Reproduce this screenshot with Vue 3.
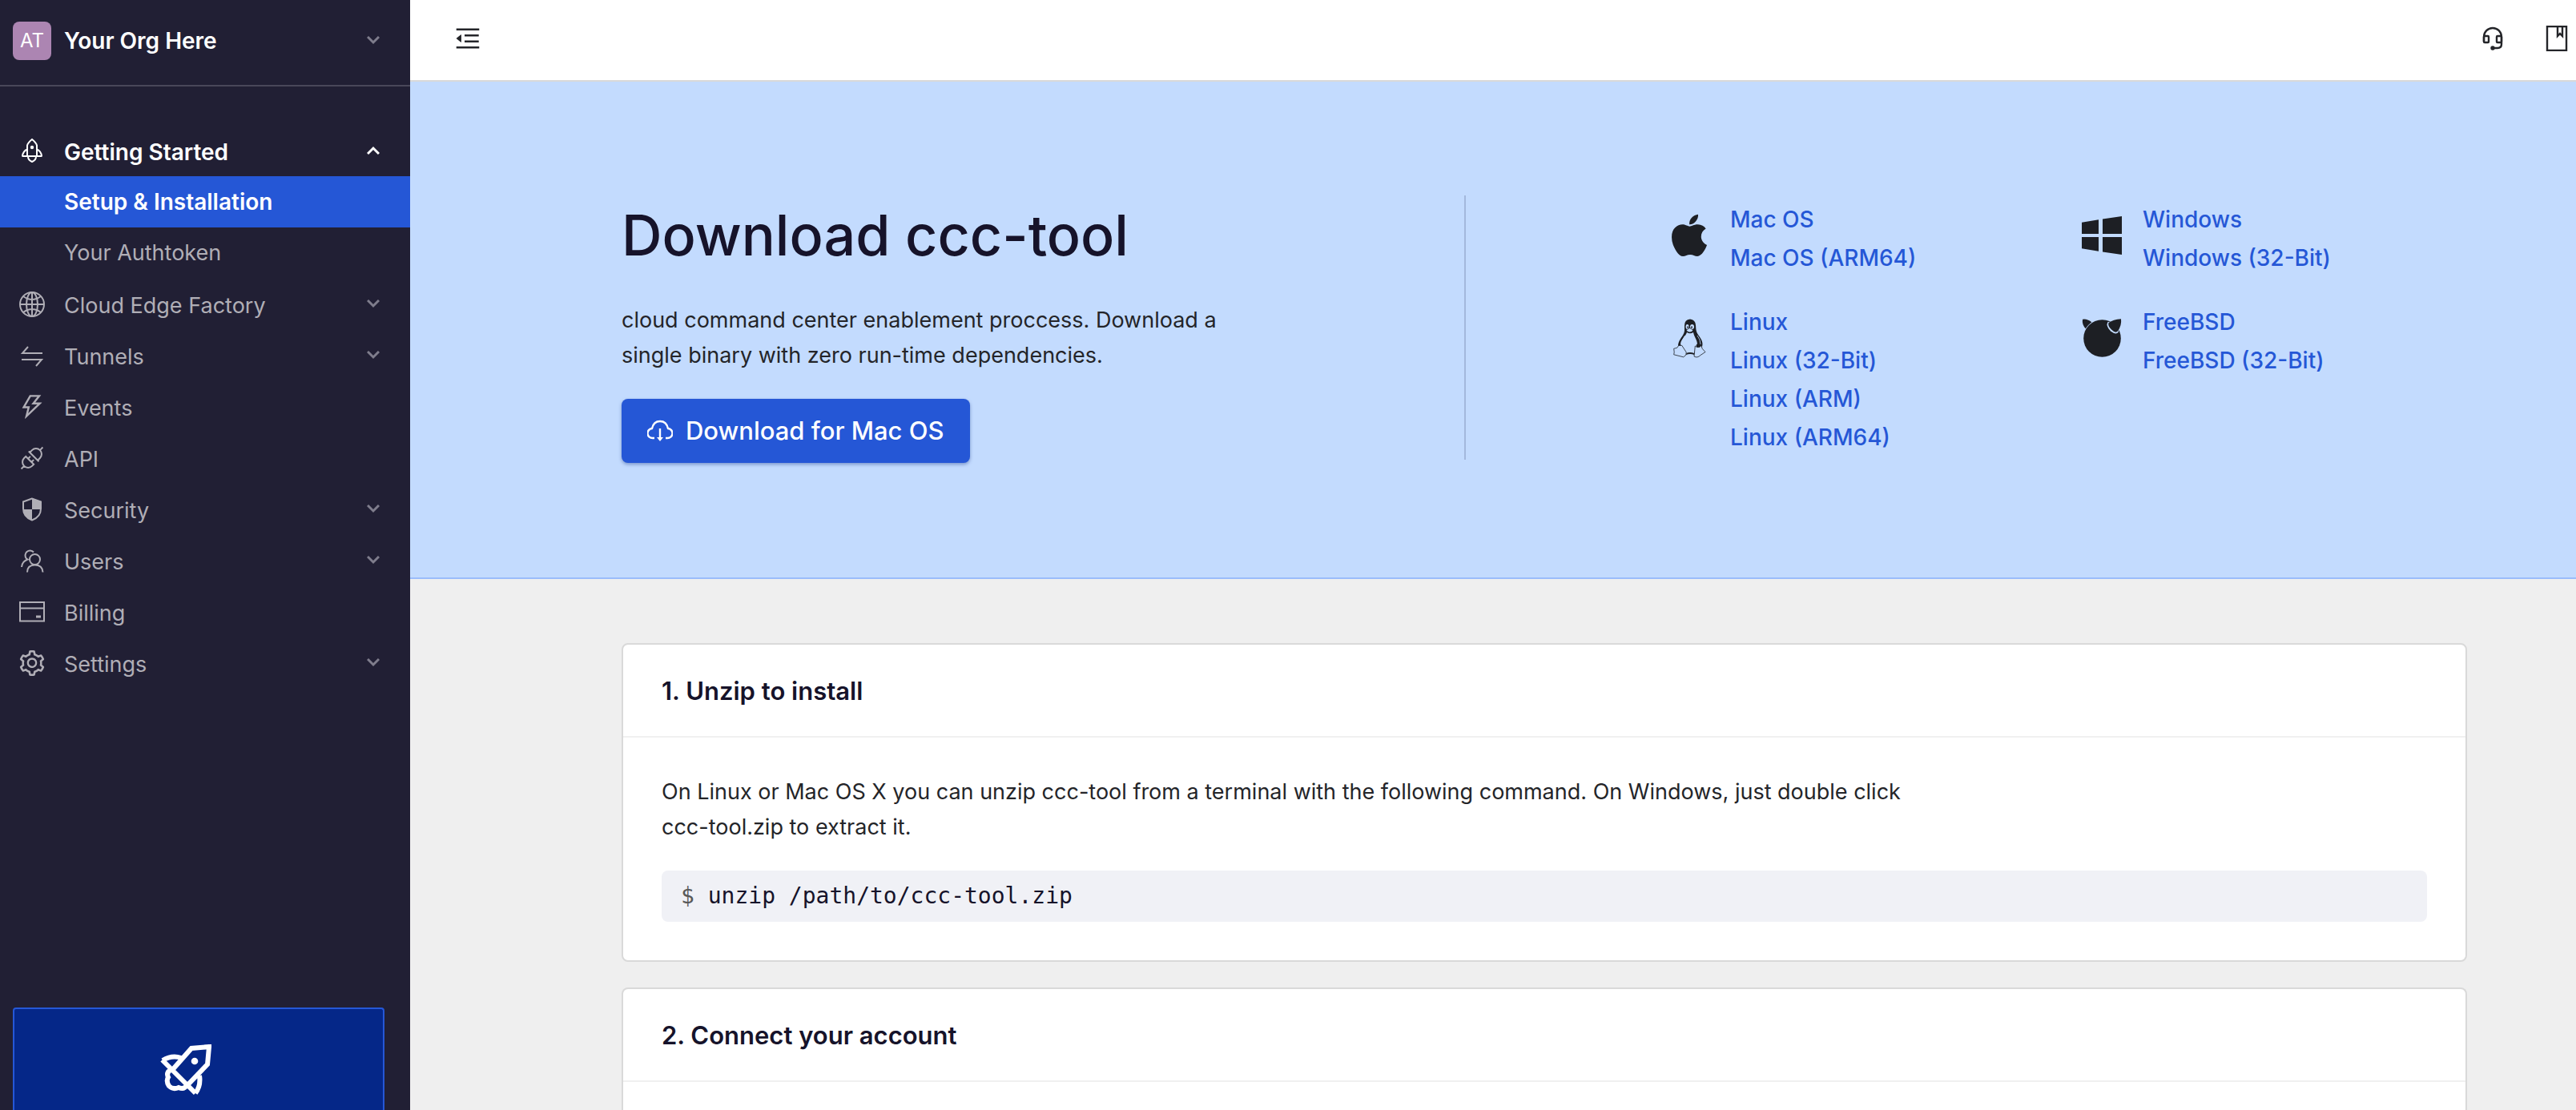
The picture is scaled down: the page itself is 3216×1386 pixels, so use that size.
<script setup>
const navItems = [
  { label: 'Cloud Edge Factory', icon: 'globe', expandable: true },
  { label: 'Tunnels', icon: 'swap', expandable: true },
  { label: 'Events', icon: 'bolt', expandable: false },
  { label: 'API', icon: 'plug', expandable: false },
  { label: 'Security', icon: 'shield', expandable: true },
  { label: 'Users', icon: 'users', expandable: true },
  { label: 'Billing', icon: 'card', expandable: false },
  { label: 'Settings', icon: 'gear', expandable: true },
]

const platforms = [
  { icon: 'apple', links: ['Mac OS', 'Mac OS (ARM64)'] },
  { icon: 'windows', links: ['Windows', 'Windows (32-Bit)'] },
  { icon: 'linux', links: ['Linux', 'Linux (32-Bit)', 'Linux (ARM)', 'Linux (ARM64)'] },
  { icon: 'freebsd', links: ['FreeBSD', 'FreeBSD (32-Bit)'] },
]
</script>

<template>
  <div class="app">
    <aside class="sidebar">
      <button class="org" type="button">
        <span class="avatar">AT</span>
        <span class="org-name">Your Org Here</span>
        <svg class="chevron" viewBox="0 0 16 12"><path d="M1 1l7 7 7-7" /></svg>
      </button>

      <nav class="nav">
        <button class="nav-item open" type="button">
          <svg class="nav-icon line" viewBox="0 0 32 32">
            <path d="M10 23V9.500Q11 6 16 2q5 4 6 7.500V23M3.500 23h25M10 14.500Q4.500 17 4 23M22 14.500q5.500 2.500 6 8.500M11 23.500Q11 28 16 30q5-2 5-6.500" />
            <circle cx="16" cy="12" r="1.200" />
          </svg>
          <span class="nav-label">Getting Started</span>
          <svg class="chevron" viewBox="0 0 16 12"><path d="M1 10l7-7 7 7" /></svg>
        </button>
        <a class="sub-item active" href="#setup">Setup &amp; Installation</a>
        <a class="sub-item" href="#authtoken">Your Authtoken</a>

        <button v-for="item in navItems" :key="item.label" class="nav-item" type="button">
          <svg v-if="item.icon === 'globe'" class="nav-icon line" viewBox="0 0 32 32">
            <circle cx="16" cy="16" r="15" />
            <ellipse cx="16" cy="16" rx="7" ry="15" />
            <path d="M16 1v30M1 16h30M5 6q11 8 22 0M5 26q11-8 22 0" />
          </svg>
          <svg v-else-if="item.icon === 'swap'" class="nav-icon line" viewBox="0 0 32 32">
            <path d="M29 13H4l7-8M3 21h25l-7 8" />
          </svg>
          <svg v-else-if="item.icon === 'bolt'" class="nav-icon solid" viewBox="64 64 896 896">
            <path d="M848 359.300H627.700L825.800 109c4.100-5.300.4-13-6.300-13H436c-2.800 0-5.500 1.500-6.900 4L170 547.500c-3.100 5.300.7 12 6.900 12h174.400l-89.400 357.600c-1.900 7.800 7.500 13.300 13.300 7.700L853.500 373c5.200-4.900 1.700-13.700-5.500-13.700zM378.200 732.500l60.300-241H281.100l189.600-327.400h224.600L487 427.400h211L378.200 732.500z" />
          </svg>
          <svg v-else-if="item.icon === 'plug'" class="nav-icon line" viewBox="0 0 32 32">
            <g transform="translate(16 16) rotate(-45)">
              <path d="M-19 0h5M-4-8v16M-4-7h-3a7 7 0 0 0 0 14h3M-4-3h4M-4 3h4M14 0h5M3-9v18M3-7h4a7 7 0 0 1 0 14H3" />
            </g>
          </svg>
          <svg v-else-if="item.icon === 'shield'" class="nav-icon" viewBox="0 0 32 32">
            <path class="stroke" d="M16 2.500L5 6.500V15q0 10.500 11 14.500 11-4 11-14.500V6.500z" />
            <path class="fill" d="M16 2v14h11V6zM5 16h11v14Q6 26 5 16z" />
          </svg>
          <svg v-else-if="item.icon === 'users'" class="nav-icon line" viewBox="0 0 32 32">
            <circle cx="19.500" cy="14.500" r="6.500" />
            <path d="M10 30.500q0-9 9.500-9t10 9M18 5.500A6 6 0 1 0 9 13.500l1.500 1Q3.500 17 3 24" />
          </svg>
          <svg v-else-if="item.icon === 'card'" class="nav-icon line" viewBox="0 0 32 32">
            <path d="M1 4h30v23.500H1zM1 11.500h30" />
            <path class="thick" d="M21 22h6" />
          </svg>
          <svg v-else class="nav-icon solid" viewBox="64 64 896 896">
            <path d="M924.800 625.700l-65.500-56c3.100-19 4.700-38.400 4.700-57.800s-1.600-38.800-4.700-57.800l65.500-56a32.030 32.030 0 009.300-35.200l-.9-2.600a443.740 443.740 0 00-79.700-137.900l-1.800-2.100a32.120 32.120 0 00-35.100-9.500l-81.300 28.900c-30-24.600-63.500-44-99.700-57.600l-15.700-85a32.050 32.050 0 00-25.800-25.700l-2.700-.5c-52.100-9.400-106.900-9.400-159 0l-2.700.5a32.050 32.050 0 00-25.800 25.700l-15.800 85.400a351.860 351.860 0 00-99 57.400l-81.900-29.100a32 32 0 00-35.100 9.500l-1.800 2.100a446.020 446.020 0 00-79.700 137.900l-.9 2.600c-4.500 12.500-.8 26.500 9.300 35.200l66.300 56.600c-3.100 18.800-4.600 38-4.600 57.100 0 19.200 1.500 38.400 4.600 57.100L99 625.500a32.030 32.030 0 00-9.300 35.200l.9 2.600c18.100 50.400 44.900 96.900 79.700 137.900l1.800 2.100a32.120 32.120 0 0035.100 9.500l81.900-29.100c29.800 24.500 63.100 43.900 99 57.400l15.800 85.400a32.050 32.050 0 0025.800 25.700l2.700.5a449.400 449.400 0 00159 0l2.700-.5a32.050 32.050 0 0025.800-25.700l15.700-85a350 350 0 0099.700-57.600l81.300 28.900a32 32 0 0035.100-9.500l1.800-2.100c34.800-41.100 61.600-87.500 79.700-137.900l.9-2.600c4.500-12.300.8-26.300-9.300-35zM788.300 465.900c2.500 15.100 3.800 30.600 3.800 46.100s-1.300 31-3.800 46.100l-6.600 40.100 74.700 63.900a370.030 370.030 0 01-42.600 73.600L721 702.800l-31.400 25.800c-23.900 19.600-50.500 35-79.300 45.800l-38.100 14.300-17.900 97a377.500 377.500 0 01-85 0l-17.900-97.200-37.800-14.500c-28.500-10.800-55-26.200-78.700-45.700l-31.400-25.900-93.400 33.200c-17-22.900-31.200-47.600-42.600-73.600l75.500-64.500-6.500-40c-2.400-14.900-3.700-30.300-3.700-45.500 0-15.300 1.200-30.600 3.700-45.500l6.500-40-75.500-64.500c11.300-26.100 25.600-50.700 42.600-73.600l93.400 33.200 31.400-25.900c23.700-19.500 50.200-34.900 78.700-45.700l37.900-14.300 17.900-97.200c28.100-3.200 56.800-3.200 85 0l17.900 97 38.100 14.300c28.700 10.800 55.400 26.200 79.300 45.800l31.400 25.800 92.800-32.900c17 22.900 31.200 47.600 42.600 73.600L781.800 426l6.500 39.900zM512 326c-97.200 0-176 78.800-176 176s78.800 176 176 176 176-78.800 176-176-78.800-176-176-176zm79.200 255.200A111.600 111.600 0 01512 614c-29.900 0-58-11.700-79.200-32.800A111.600 111.600 0 01400 502c0-29.900 11.700-58 32.800-79.200C454 401.600 482.100 390 512 390c29.900 0 58 11.600 79.200 32.800A111.600 111.600 0 01624 502c0 29.900-11.700 58-32.800 79.200z" />
          </svg>
          <span class="nav-label">{{ item.label }}</span>
          <svg v-if="item.expandable" class="chevron" viewBox="0 0 16 12"><path d="M1 1l7 7 7-7" /></svg>
        </button>
      </nav>

      <div class="promo">
        <svg class="promo-icon" viewBox="0 0 64 64">
          <path d="M2.500 19.500L44 61M16 31L39 5l22-2-2 22-25 26M3 20q12-7 23-3M49 39q2 13-5 22M13 32q-6 3-3 9-3 5 1 11 5 5 12 2 7 3 10-3" />
          <circle cx="43" cy="21" r="4.300" />
        </svg>
      </div>
    </aside>

    <div class="main">
      <header class="topbar">
        <button class="icon-button" type="button" aria-label="Collapse menu">
          <svg class="top-icon solid" viewBox="64 64 896 896">
            <path d="M408 442h480c4.400 0 8-3.600 8-8v-56c0-4.400-3.600-8-8-8H408c-4.400 0-8 3.600-8 8v56c0 4.400 3.600 8 8 8zm-8 204c0 4.400 3.600 8 8 8h480c4.400 0 8-3.600 8-8v-56c0-4.400-3.600-8-8-8H408c-4.400 0-8 3.600-8 8v56zm504-486H120c-4.400 0-8 3.600-8 8v56c0 4.400 3.600 8 8 8h784c4.400 0 8-3.600 8-8v-56c0-4.400-3.600-8-8-8zm0 632H120c-4.400 0-8 3.600-8 8v56c0 4.400 3.600 8 8 8h784c4.400 0 8-3.600 8-8v-56c0-4.400-3.600-8-8-8zM115.400 518.900L271.700 642c5.800 4.600 14.400.5 14.400-6.900V388.900c0-7.400-8.500-11.500-14.400-6.900L115.400 505.100a8.740 8.740 0 000 13.800z" />
          </svg>
        </button>
        <div class="top-actions">
          <button class="icon-button" type="button" aria-label="Support">
            <svg class="top-icon line" viewBox="0 0 32 32">
              <path d="M5 20v-6a11 11 0 0 1 22 0v9q0 5-5 5h-5" />
              <rect x="5" y="13" width="6" height="8" rx="1" />
              <rect x="21" y="13" width="6" height="8" rx="1" />
              <circle class="fill" cx="16" cy="28" r="1.500" />
            </svg>
          </button>
          <button class="icon-button" type="button" aria-label="Documentation">
            <svg class="top-icon line" viewBox="0 0 32 32">
              <path d="M4 1h24v30H4zM17 1v12l3-3 3 3V1" />
            </svg>
          </button>
        </div>
      </header>

      <section class="hero">
        <div class="intro">
          <h1>Download ccc-tool</h1>
          <p>cloud command center enablement proccess. Download a<br />single binary with zero run-time dependencies.</p>
          <button class="download" type="button">
            <svg class="cloud" viewBox="0 0 32 32">
              <path d="M9 25H7a6 6 0 0 1-1-12Q8 4 16 4t10 9a6 6 0 0 1-1 12h-2M16 13v14" />
              <path class="tip" d="M12 24h8l-4 5z" />
            </svg>
            Download for Mac OS
          </button>
        </div>

        <div class="platforms">
          <div v-for="platform in platforms" :key="platform.icon" class="platform">
            <svg v-if="platform.icon === 'apple'" class="os-icon" viewBox="0 26 384 462">
              <path d="M318.700 268.700c-.2-36.700 16.400-64.400 50-84.800-18.800-26.900-47.200-41.700-84.700-44.600-35.500-2.800-74.300 20.700-88.500 20.700-15 0-49.400-19.700-76.400-19.700C63.300 141.200 4 184.800 4 273.500q0 39.300 14.400 81.200c12.800 36.700 59 126.700 107.200 125.200 25.200-.6 43-17.900 75.800-17.900 31.800 0 48.300 17.900 76.400 17.900 48.600-.7 90.400-82.500 102.600-119.300-65.200-30.700-61.700-90-61.700-91.900zm-56.600-164.200c27.300-32.400 24.800-61.900 24-72.500-24.100 1.400-52 16.400-67.900 34.900-17.500 19.800-27.800 44.300-25.600 71.900 26.100 2 49.900-11.400 69.500-34.300z" />
            </svg>
            <svg v-else-if="platform.icon === 'windows'" class="os-icon" viewBox="0 -3 50 54">
              <path d="M0 7.700l21-3.400V22H0zM26 3.500L50 0v22H26zM0 26h21v17.700L0 40.300zM26 26h24v22l-24-3.500z" />
            </svg>
            <svg v-else-if="platform.icon === 'linux'" class="os-icon" viewBox="-5 -3 50 54">
              <path d="M21 .5q-7 .5-7 8c0 6 .5 8-2 12C9 25 6 29 6 34l10 11q5-2 10 0l10-10c2-6-2-11-5-15-3-5-2.500-7-3-12q-.5-7-7-7.500z" />
              <path class="cut" d="M17 17q4 2.500 8 0c1 6 5 9 5 15l-4 11q-5-2-10 0L9 32c0-6 6-9 8-15z" />
              <path class="cut outline" d="M6.700 33.500l4-.2 5.500 8.500q1 4-3.500 6l-12-3 .5-3-.5-4.500 4-1zM27.300 34q3 3 7.500-.5l1.500 4 3.700 4-6 4q-4 4-8 1.500z" />
              <ellipse cx="31.500" cy="33.500" rx="2.800" ry="2.300" />
              <path class="vein" d="M10.500 33q0-7 4-12M34 32q0-6-4-11" />
              <ellipse class="cut" cx="17.500" cy="10" rx="2" ry="3" />
              <ellipse class="cut" cx="23.500" cy="10" rx="2.500" ry="3" />
              <circle cx="18" cy="10.500" r="1" />
              <circle cx="23" cy="10.500" r="1.100" />
              <path class="cut outline" d="M16 14l4.500-2.500L25 14q-1.500 3-4.500 3T16 14z" />
            </svg>
            <svg v-else class="os-icon" viewBox="0 -3 50 54">
              <circle cx="25.500" cy="24.500" r="23.300" />
              <path class="cut" d="M32.500 4Q29.500 9 36 15.500q6.500 5 9.500 1.500l2.500-8-3-6z" />
              <path d="M1 .8Q0 7 4.700 12.300 8 7.500 12.300 4.300 6-.5 1 .8zM49 .3Q39 1 33.500 5q-1.500 4 3.500 8.500 5 5 8 2Q50 8 49 .3z" />
            </svg>
            <ul class="links">
              <li v-for="link in platform.links" :key="link"><a href="#download">{{ link }}</a></li>
            </ul>
          </div>
        </div>
      </section>

      <div class="steps">
        <section class="card">
          <h2>1. Unzip to install</h2>
          <div class="card-body">
            <p>On Linux or Mac OS X you can unzip ccc-tool from a terminal with the following command. On Windows, just double click<br />ccc-tool.zip to extract it.</p>
            <pre><span class="prompt">$ </span>unzip /path/to/ccc-tool.zip</pre>
          </div>
        </section>
        <section class="card last">
          <h2>2. Connect your account</h2>
        </section>
      </div>
    </div>
  </div>
</template>

<style>
body {
  margin: 0;
}
</style>

<style scoped>
.app {
  display: flex;
  min-height: 100vh;
  background: #efefef;
  color: #242529;
  font-family: Inter, "Liberation Sans", sans-serif;
  font-size: 27px;
  line-height: 44px;
}
h1, h2, p, ul, pre {
  margin: 0;
}
button {
  padding: 0;
  border: 0;
  background: none;
  color: inherit;
  font: inherit;
  text-align: left;
}
a {
  color: inherit;
  text-decoration: none;
}
.sidebar {
  display: flex;
  flex: 0 0 512px;
  flex-direction: column;
  background: #211f34;
  color: #b0aeb6;
}
.org {
  display: flex;
  align-items: center;
  box-sizing: border-box;
  height: 108px;
  padding: 0 38px 4px 16px;
  border-bottom: 2px solid #494759;
}
.avatar {
  width: 48px;
  border-radius: 8px;
  background: #ac85b2;
  color: #fff;
  font-size: 24px;
  line-height: 48px;
  text-align: center;
}
.org-name {
  flex: 1;
  margin-left: 16px;
  color: #fff;
  font-size: 28px;
  font-weight: 600;
}
.chevron {
  width: 16px;
  height: 12px;
  fill: none;
  stroke: #7f7d8c;
  stroke-width: 3;
}
.nav {
  display: flex;
  flex-direction: column;
  padding-top: 48px;
}
.nav-item {
  display: flex;
  align-items: center;
  height: 64px;
  padding: 0 38px 0 24px;
}
.nav-item.open {
  color: #fff;
  font-size: 28px;
  font-weight: 600;
}
.open .chevron {
  stroke: #fff;
}
.nav-icon {
  width: 32px;
  height: 32px;
}
.nav-label {
  flex: 1;
  padding: 4px 0 0 24px;
}
.line {
  fill: none;
  stroke: currentColor;
  stroke-width: 2;
}
.solid,
.fill {
  fill: currentColor;
}
.stroke {
  fill: none;
  stroke: currentColor;
  stroke-width: 2;
}
.thick {
  stroke-width: 3;
}
.sub-item {
  padding-left: 80px;
  line-height: 64px;
}
.sub-item.active {
  background: #2557d6;
  color: #fff;
  font-size: 28px;
  font-weight: 600;
}
.promo {
  display: flex;
  justify-content: center;
  box-sizing: border-box;
  height: 128px;
  margin: auto 32px 0 16px;
  padding: 44px 32px 0 0;
  border: 2px solid #2557d6;
  border-bottom: 0;
  border-radius: 4px 4px 0 0;
  background: #052788;
}
.promo-icon {
  width: 64px;
  height: 64px;
  fill: none;
  stroke: #fff;
  stroke-width: 6;
}
.promo-icon circle {
  fill: #fff;
  stroke: none;
}
.main {
  display: flex;
  flex: 1;
  flex-direction: column;
  min-width: 0;
}
.topbar {
  display: flex;
  align-items: center;
  justify-content: space-between;
  box-sizing: border-box;
  height: 102px;
  padding: 0 8px 4px 56px;
  border-bottom: 2px solid #d9d9d9;
  background: #fff;
}
.icon-button {
  display: flex;
}
.top-icon {
  width: 32px;
  height: 32px;
}
.top-actions {
  display: flex;
  gap: 48px;
}
.top-actions .line {
  stroke-width: 2.4;
}
.hero {
  display: grid;
  grid-template-columns: 1054fr 1250fr;
  padding: 142px 136px 147px 264px;
  border-bottom: 2px solid #9bbdfb;
  background: #c3dbfe;
}
.intro {
  display: flex;
  flex-direction: column;
  align-items: flex-start;
  box-sizing: border-box;
  height: 330px;
  border-right: 2px solid #a3b8dc;
}
h1 {
  color: #16132a;
  font-size: 70px;
  font-weight: 500;
  line-height: 100px;
}
.intro p {
  margin: 34px 0 32px;
}
.download {
  display: flex;
  flex: none;
  align-items: center;
  gap: 16px;
  height: 80px;
  padding: 0 32px;
  border-radius: 8px;
  background: #2557d6;
  box-shadow: 0 2px 4px #7a96cc;
  color: #fff;
  font-size: 31px;
  font-weight: 500;
}
.cloud {
  width: 32px;
  height: 32px;
  fill: none;
  stroke: #fff;
  stroke-width: 2.4;
}
.cloud .tip {
  fill: #fff;
  stroke: none;
}
.platforms {
  display: grid;
  grid-template-columns: 1fr 1fr;
  align-content: start;
  gap: 32px;
  padding: 6px 0 0 252px;
}
.platform {
  display: flex;
}
.os-icon {
  width: 54px;
  height: 54px;
  margin: 17px 24px 0 0;
  fill: #1d1f24;
}
.cut {
  fill: #c3dbfe;
}
.outline {
  stroke: #1d1f24;
  stroke-width: 0.8;
}
.vein {
  fill: none;
  stroke: #c3dbfe;
  stroke-width: 0.8;
}
.links {
  padding: 0;
  color: #2557d6;
  font-size: 28px;
  font-weight: 500;
  line-height: 48px;
  list-style: none;
}
.steps {
  display: flex;
  flex: 1;
  flex-direction: column;
  gap: 32px;
  padding: 80px 136px 0 264px;
}
.card {
  border: 2px solid #d9d9d9;
  border-radius: 8px;
  background: #fff;
}
.card.last {
  flex: 1;
  border-bottom: 0;
  border-radius: 8px 8px 0 0;
}
h2 {
  padding: 36px 48px 34px;
  border-bottom: 2px solid #f0f0f0;
  color: #16132a;
  font-size: 31px;
  font-weight: 600;
  line-height: 44px;
}
.card-body {
  padding: 46px 48px 48px;
}
.card-body p {
  margin-bottom: 32px;
}
pre {
  padding: 0 24px;
  border-radius: 8px;
  background: #f0f1f6;
  color: #16132a;
  font-family: "DejaVu Sans Mono", monospace;
  font-size: 28px;
  line-height: 64px;
}
.prompt {
  color: #595959;
}
</style>
